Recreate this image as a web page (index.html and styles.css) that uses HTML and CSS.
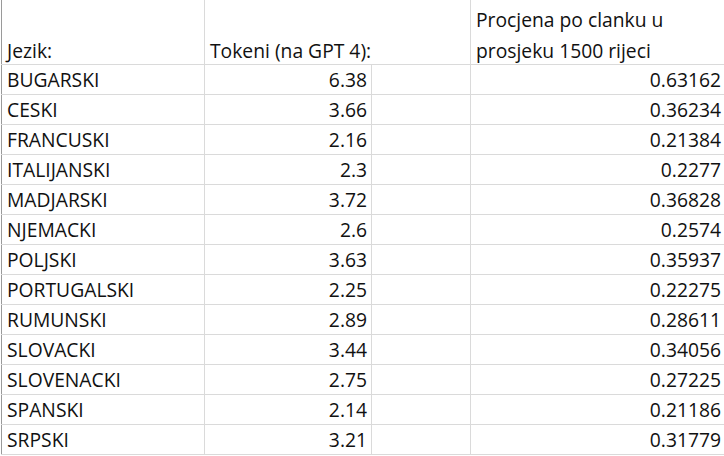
FILE: index.html
```html
<!DOCTYPE html>
<html>
<head>
<meta charset="utf-8">
<link rel="stylesheet" href="styles.css">
</head>
<body>
<table class="sheet">
  <colgroup>
    <col class="c-a"><col class="c-b"><col class="c-c"><col class="c-d">
  </colgroup>
  <tr class="head">
    <td>Jezik:</td>
    <td colspan="2">Tokeni (na GPT 4):</td>
    <td><div class="line1">Procjena po clanku u</div><div>prosjeku 1500 rijeci</div></td>
  </tr>
  <tr><td>BUGARSKI</td><td class="num">6.38</td><td></td><td class="num">0.63162</td></tr>
  <tr><td>CESKI</td><td class="num">3.66</td><td></td><td class="num">0.36234</td></tr>
  <tr><td>FRANCUSKI</td><td class="num">2.16</td><td></td><td class="num">0.21384</td></tr>
  <tr><td>ITALIJANSKI</td><td class="num">2.3</td><td></td><td class="num">0.2277</td></tr>
  <tr><td>MADJARSKI</td><td class="num">3.72</td><td></td><td class="num">0.36828</td></tr>
  <tr><td>NJEMACKI</td><td class="num">2.6</td><td></td><td class="num">0.2574</td></tr>
  <tr><td>POLJSKI</td><td class="num">3.63</td><td></td><td class="num">0.35937</td></tr>
  <tr><td>PORTUGALSKI</td><td class="num">2.25</td><td></td><td class="num">0.22275</td></tr>
  <tr><td>RUMUNSKI</td><td class="num">2.89</td><td></td><td class="num">0.28611</td></tr>
  <tr><td>SLOVACKI</td><td class="num">3.44</td><td></td><td class="num">0.34056</td></tr>
  <tr><td>SLOVENACKI</td><td class="num">2.75</td><td></td><td class="num">0.27225</td></tr>
  <tr><td>SPANSKI</td><td class="num">2.14</td><td></td><td class="num">0.21186</td></tr>
  <tr><td>SRPSKI</td><td class="num">3.21</td><td></td><td class="num">0.31779</td></tr>
</table>
</body>
</html>
```

FILE: styles.css
```css
html, body {
  margin: 0;
  padding: 0;
  background: #ffffff;
  overflow: hidden;
}
.sheet {
  border-collapse: collapse;
  table-layout: fixed;
  width: 724px;
  margin-left: 1px;
  font-family: "Open Sans", Lato, sans-serif;
  font-size: 19.3px;
  color: #111111;
}
.c-a { width: 203px; }
.c-b { width: 167px; }
.c-c { width: 99px; }
.c-d { width: 255px; }
.sheet td {
  border: 1px solid #dadada;
  height: 29px;
  padding: 0 4px 0 5px;
  white-space: nowrap;
  vertical-align: middle;
  line-height: 29px;
}
.sheet tr:first-child td {
  border-top: none;
}
.sheet td:first-child {
  border-left: 1px solid #9a9a9a;
}
.sheet .head td {
  height: 64px;
  vertical-align: bottom;
  padding-bottom: 0;
  line-height: 27px;
}
.sheet .head .line1 {
  margin-bottom: 4px;
}
.sheet .num {
  text-align: right;
}
```
